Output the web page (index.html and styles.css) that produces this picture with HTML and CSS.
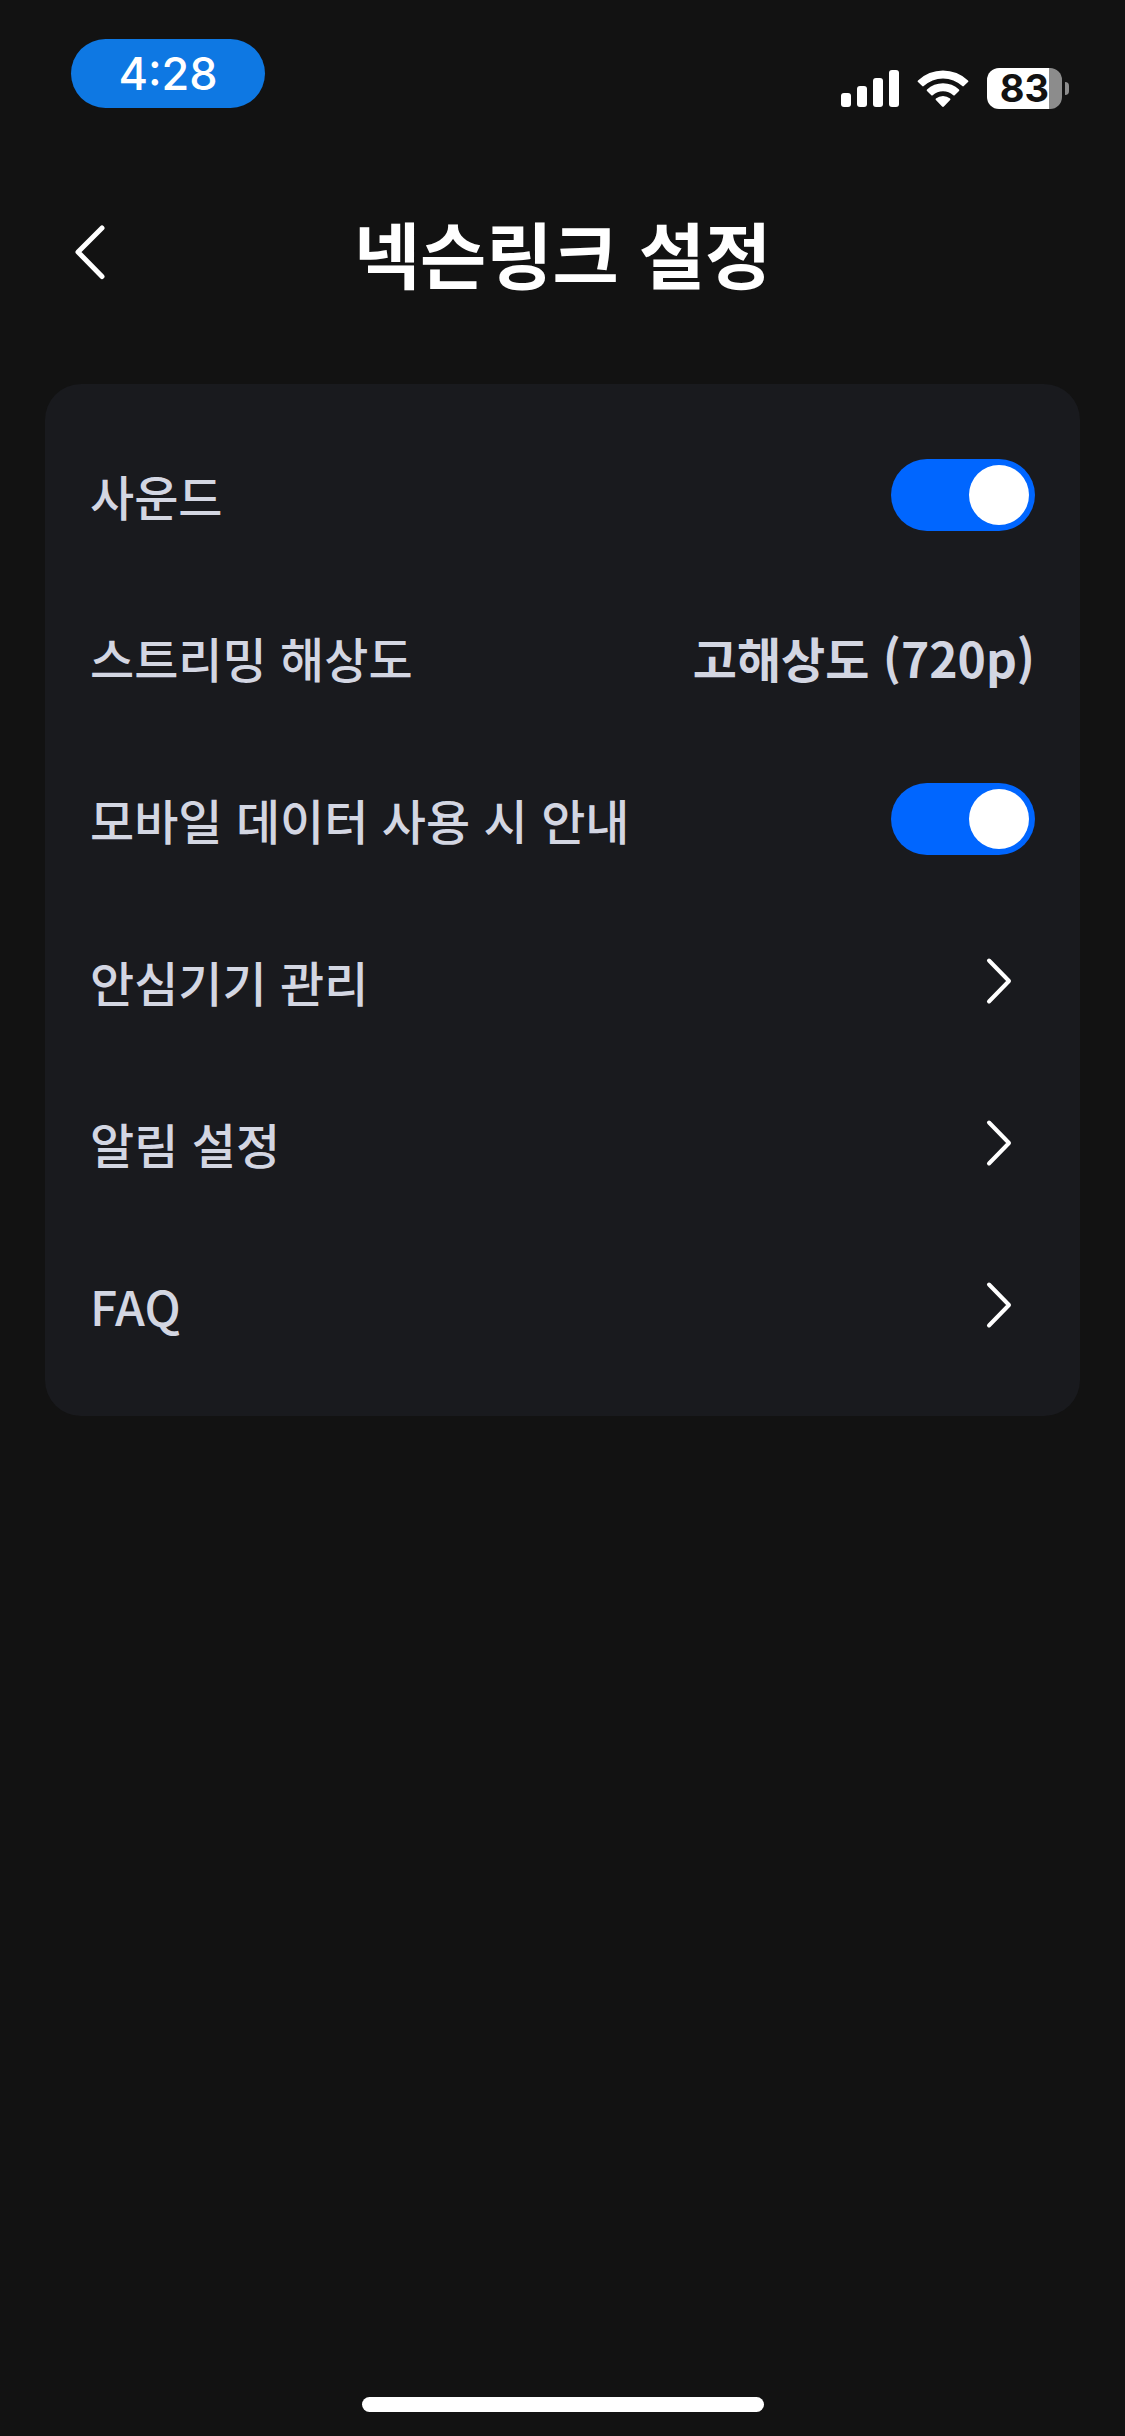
FILE: index.html
```html
<!DOCTYPE html>
<html lang="ko">
<head>
    <meta charset="UTF-8">
    <meta name="viewport" content="width=device-width, initial-scale=1.0">
    <title>넥슨링크 설정</title>
    <link rel="stylesheet" href="styles.css">
</head>
<body>
    <div class="status-bar">
        <div class="time">4:28</div>
        <div class="status-icons">
            <svg class="signal" viewBox="0 0 58 37" aria-hidden="true">
                <rect x="0" y="23" width="10" height="14" rx="3"/>
                <rect x="16" y="16" width="10" height="21" rx="3"/>
                <rect x="32" y="8" width="10" height="29" rx="3"/>
                <rect x="48" y="0" width="10" height="37" rx="3"/>
            </svg>
            <svg class="wifi" viewBox="0 0 52 38" aria-hidden="true">
                <path d="M1 10.500A36 36 0 0 1 51 10.500Q51.800 11.300 51 12.100L46.800 16.100Q46 16.700 45.300 16.100A28 28 0 0 0 6.700 16.100Q6 16.700 5.200 16.100L1 12.100Q.2 11.300 1 10.500Z"/>
                <path d="M10 19.500A23.500 23.500 0 0 1 42 19.500Q42.700 20.300 42 21L37.700 25.200Q37 25.800 36.300 25.200A15.500 15.500 0 0 0 15.700 25.200Q15 25.800 14.300 25.200L10 21Q9.300 20.300 10 19.500Z"/>
                <path d="M18.900 28.500A11 11 0 0 1 33.100 28.500Q33.900 29.300 33.100 30.100L26.900 36.500Q26 37.400 25.100 36.500L18.900 30.100Q18.100 29.300 18.900 28.500Z"/>
            </svg>
            <div class="battery">
                <div class="battery-body">83</div>
                <div class="battery-tip"></div>
            </div>
        </div>
    </div>

    <header class="header">
        <button class="back" type="button" aria-label="뒤로">
            <svg viewBox="0 0 90 90" aria-hidden="true">
                <path d="M57 21 33 45 57 69.500"/>
            </svg>
        </button>
        <h1>넥슨링크 설정</h1>
    </header>

    <main class="card">
        <div class="row">
            <label for="sound">사운드</label>
            <input class="switch" type="checkbox" role="switch" id="sound" checked>
        </div>
        <button class="row" type="button">
            <span>스트리밍 해상도</span>
            <strong>고해상도 (720p)</strong>
        </button>
        <div class="row">
            <label for="mobile-data">모바일 데이터 사용 시 안내</label>
            <input class="switch" type="checkbox" role="switch" id="mobile-data" checked>
        </div>
        <a class="row" href="#devices">
            <span>안심기기 관리</span>
            <svg class="chevron" viewBox="0 0 72 72" aria-hidden="true"><path d="M26 15.500 46 36 26 56.500"/></svg>
        </a>
        <a class="row" href="#notifications">
            <span>알림 설정</span>
            <svg class="chevron" viewBox="0 0 72 72" aria-hidden="true"><path d="M26 15.500 46 36 26 56.500"/></svg>
        </a>
        <a class="row" href="#faq">
            <span>FAQ</span>
            <svg class="chevron" viewBox="0 0 72 72" aria-hidden="true"><path d="M26 15.500 46 36 26 56.500"/></svg>
        </a>
    </main>

    <div class="home-indicator"></div>
</body>
</html>
```

FILE: styles.css
```css
* {
    box-sizing: border-box;
}
body {
    display: flex;
    flex-direction: column;
    min-height: 100vh;
    margin: 0;
    background-color: #121212;
    color: #fff;
    font-family: "Noto Sans CJK KR", sans-serif;
}

/* Status bar */
.status-bar {
    display: flex;
    justify-content: space-between;
    align-items: flex-start;
    height: 132px;
    padding: 39px 56px 0 71px;
    font-family: Inter, sans-serif;
}
.time {
    width: 194px;
    border-radius: 35px;
    background-color: #0e78e3;
    font-size: 45px;
    font-weight: 500;
    line-height: 69px;
    text-align: center;
}
.status-icons {
    display: flex;
    align-items: center;
    gap: 18px;
    padding-top: 29px;
}
.status-icons svg {
    display: block;
    fill: #fff;
}
.signal {
    width: 58px;
    height: 37px;
}
.wifi {
    width: 52px;
    height: 38px;
}
.battery {
    display: flex;
    align-items: center;
    gap: 3px;
}
.battery-body {
    width: 75px;
    border-radius: 12px;
    background: linear-gradient(to right, #fff 62px, #8c8c8c 62px);
    color: #121212;
    font-size: 38px;
    font-weight: 700;
    line-height: 41px;
    text-align: center;
}
.battery-tip {
    width: 4px;
    height: 13px;
    border-radius: 0 4px 4px 0;
    background-color: #8c8c8c;
}

/* Header */
.header {
    display: grid;
    grid-template-columns: 90px 1fr 90px;
    align-items: center;
    height: 240px;
    padding: 0 45px;
}
.header h1 {
    margin: 0;
    font-size: 72px;
    font-weight: 700;
    line-height: 104px;
    text-align: center;
}
.back {
    padding: 0;
    border: none;
    background: none;
    cursor: pointer;
}
.back svg {
    display: block;
    width: 90px;
    height: 90px;
}
.back path, .chevron path {
    fill: none;
    stroke: #fff;
    stroke-width: 5;
    stroke-linecap: round;
    stroke-linejoin: round;
}

/* Settings list */
.card {
    margin: 12px 45px 0;
    padding: 30px 45px;
    border-radius: 36px;
    background-color: #191a1e;
}
.row {
    display: flex;
    justify-content: space-between;
    align-items: center;
    width: 100%;
    height: 162px;
    padding: 0;
    border: none;
    background: none;
    color: #d3d6e2;
    font-family: inherit;
    font-size: 48px;
    font-weight: 500;
    line-height: 72px;
    text-decoration: none;
    cursor: pointer;
}
.row strong {
    font-weight: 700;
}
.switch {
    appearance: none;
    width: 144px;
    height: 72px;
    margin: 0;
    padding: 6px;
    border-radius: 36px;
    background-color: #4a4c55;
    cursor: pointer;
}
.switch::before {
    content: "";
    display: block;
    width: 60px;
    height: 60px;
    border-radius: 50%;
    background-color: #fff;
}
.switch:checked {
    background-color: #0066ff;
}
.switch:checked::before {
    margin-left: auto;
}
.chevron {
    width: 72px;
    height: 72px;
}
.chevron path {
    stroke-width: 4;
}

.home-indicator {
    width: 402px;
    height: 15px;
    margin: auto auto 24px;
    border-radius: 8px;
    background-color: #fff;
}
```
